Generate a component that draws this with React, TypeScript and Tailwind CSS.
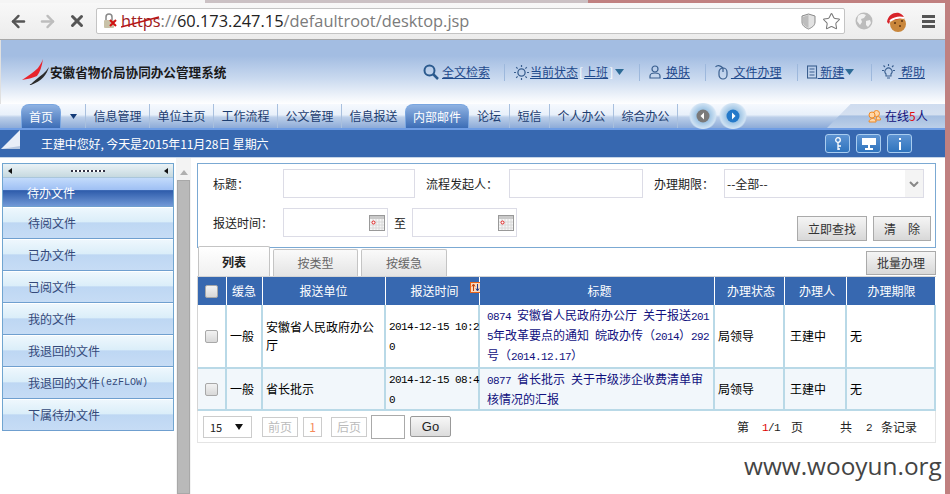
import React from "react";
import { ArrowLeft, ArrowRight, X, Star } from "lucide-react";

const M = ({ children }: { children: React.ReactNode }) => (
  <span className="font-['Liberation_Mono',monospace] text-[11px] tracking-[-0.6px] whitespace-pre">{children}</span>
);

const Sep = () => <div className="w-px h-[17px] bg-[#9db8dc] ml-[15px] mr-[9px]" />;

const Cal = () => (
  <svg width="16" height="16" viewBox="0 0 16 16" className="shrink-0">
    <rect x="0.5" y="0.5" width="15" height="15" fill="#f6f6f6" stroke="#999" />
    <rect x="1" y="1" width="14" height="3" fill="#c9c9c9" />
    <path d="M1 7h14M1 10h14M1 13h14M4 4v11M7 4v11M10 4v11M13 4v11" stroke="#d8d8d8" />
    <circle cx="4.5" cy="7.5" r="1.5" fill="#fff" stroke="#e02020" />
  </svg>
);

const Logo = () => (
  <svg width="28" height="27" viewBox="0 0 28 27" className="shrink-0">
    <path d="M21 0 C20 7 18 13 15 17 C11 19 5 20 0 21 C6 17 12 13 16 9 C18 6 20 3 21 0Z" fill="#e8232c" />
    <path d="M27 8 C25 15 20 22 9 26 C6 26 9 25 9 25 C13 21 17 18 21 15 C23 13 25 11 27 8Z" fill="#2a2a2a" />
  </svg>
);

const Drop = () => <svg width="9" height="6" viewBox="0 0 9 6" className="shrink-0"><path d="M0 0h9L4.5 6z" fill="#2d6b96" /></svg>;

const Sun = () => (
  <svg width="15" height="15" viewBox="0 0 15 15" fill="none" stroke="#3a5f8f" className="shrink-0">
    <circle cx="7.5" cy="7.5" r="3.6" strokeWidth="1.3" />
    <path d="M7.5 0v2M7.5 13v2M0 7.5h2M13 7.5h2M2.2 2.2l1.4 1.4M11.4 11.4l1.4 1.4M2.2 12.8l1.4-1.4M11.4 3.6l1.4-1.4" strokeWidth="1.2" />
  </svg>
);

const RoundBtn = ({ dir, color }: { dir: "l" | "r"; color: string }) => (
  <div className="w-[28px] h-[26px] flex items-center justify-center rounded-full bg-[radial-gradient(circle,#8fbbe0_25%,#cfe2f3_65%,transparent_75%)]">
    <svg width="14" height="14" viewBox="0 0 14 14">
      <circle cx="7" cy="7" r="6.5" fill={color} />
      <path d={dir === "l" ? "M8 3.5v7L4.5 7z" : "M6 3.5v7L9.5 7z"} fill="#fff" />
    </svg>
  </div>
);

const BarBtn = ({ children }: { children: React.ReactNode }) => (
  <div className="w-[25px] h-[19px] rounded-[3px] border border-[#a9cdf0] bg-[linear-gradient(#5d93d2,#2f74be)] flex items-center justify-center">
    {children}
  </div>
);

const SideItem = ({ t }: { t: React.ReactNode }) => (
  <div className="h-[32px] pl-[25px] flex items-center text-[#34497a] border-b border-[#6f9fcf] bg-[linear-gradient(#eef7fd_0%,#dbeef9_45%,#bed7f3_50%,#c6dcf5_100%)] border-t border-t-white">
    {t}
  </div>
);

const Th = ({ w, children, cls = "" }: { w: number; children?: React.ReactNode; cls?: string }) => (
  <th style={{ width: w }} className={"h-[28px] p-0 bg-[#3768b0] border-r border-white text-white font-normal text-center relative " + cls}>
    {children}
  </th>
);

const Td = ({ children, cls = "pl-[3px]" }: { children?: React.ReactNode; cls?: string }) => (
  <td className={"p-0 whitespace-nowrap border-r-2 border-b-2 border-[#b9d9e7] leading-[18px] text-black " + cls}>{children}</td>
);

const Chk = () => <div className="w-[13px] h-[13px] rounded-[2px] border border-[#a8a8a8] bg-[linear-gradient(#f2f2f2,#d8d8d8)] mx-auto" />;

const PageBtn = ({ w, children }: { w: number; children: React.ReactNode }) => (
  <div style={{ width: w }} className="h-[20px] border border-[#ccc] text-[#bbb] flex items-center justify-center">{children}</div>
);

const ToolBtn = ({ w, children }: { w: number; children: React.ReactNode }) => (
  <div style={{ width: w }} className="h-[25px] border border-[#aaa] bg-[linear-gradient(#f5f5f5,#d8d8d8)] text-[#333] flex items-center justify-center">{children}</div>
);

export default function App() {
  return (
    <div className="relative w-[950px] h-[494px] overflow-hidden bg-white flex flex-col text-[12px] leading-[18px] font-['Noto_Sans_CJK_SC','Liberation_Sans',sans-serif]">
      <div className="h-[3px] flex shrink-0">
        <div className="w-[205px] bg-[#f5f5f5]" />
        <div className="w-[383px] bg-[#cbc1c4]" />
        <div className="flex-1 bg-[#c08080]" />
      </div>
      <div className="flex flex-1 min-h-0">
        <div className="w-[945px] flex flex-col">
          {/* browser toolbar */}
          <div className="h-[37px] shrink-0 flex items-center bg-[linear-gradient(#f8f8f8,#ececec)] border-b border-[#a8a8a8]">
            <ArrowLeft size={19} strokeWidth={3} className="ml-[9px] text-[#555] shrink-0" />
            <ArrowRight size={19} strokeWidth={3} className="ml-[10px] text-[#bdbdbd] shrink-0" />
            <X size={18} strokeWidth={4} className="ml-[11px] text-[#555] shrink-0" />
            <div className="ml-[10px] w-[749px] h-[26px] rounded-[2px] border border-[#c4c4c4] bg-white flex items-center pl-[6px] shrink-0">
              <div className="relative w-[15px] h-[16px] shrink-0">
                <svg width="15" height="16" viewBox="0 0 15 16">
                  <path d="M3 7V4a3 3 0 0 1 6 0v3" fill="none" stroke="#888" strokeWidth="1.5" />
                  <rect x="1" y="7" width="10" height="8" rx="1" fill="#c9c2a8" />
                  <path d="M7 7l6 6M13 7l-6 6" stroke="#d01010" strokeWidth="2" />
                </svg>
              </div>
              <div className="ml-[3px] text-[16.4px] font-['Open_Sans',sans-serif] whitespace-nowrap text-[#7b7b7b]">
                <span className="relative text-[#a02020]">
                  https
                  <svg width="40" height="12" viewBox="0 0 40 12" className="absolute left-0 top-[7px]">
                    <path d="M0 11 L38 1" stroke="#b81414" strokeWidth="1.5" />
                  </svg>
                </span>
                ://<span className="text-[#222]">60.173.247.15</span>/defaultroot/desktop.jsp
              </div>
              <div className="ml-auto flex items-center gap-[6px] pr-[3px]">
                <svg width="15" height="17" viewBox="0 0 15 17">
                  <path d="M7.5 1 L14 3 V9 C14 13 10 15 7.5 16 C5 15 1 13 1 9 V3Z" fill="#e2e2e2" stroke="#8a8a8a" />
                  <path d="M7.5 2 L7.5 15 C5 14 2 12 2 9 V4Z" fill="#bdbdbd" />
                </svg>
                <Star size={19} strokeWidth={1.3} className="text-[#777]" />
              </div>
            </div>
            <svg width="18" height="18" viewBox="0 0 18 18" className="ml-[10px] shrink-0">
              <circle cx="9" cy="9" r="8.5" fill="#bcbcbc" />
              <path d="M3 4c3-3 6-2 8-1l-2 3-3 1 1 3-2 3-3-4zM11 9l4-1 1 3-3 4-2-2z" fill="#f1f1f1" />
            </svg>
            <svg width="21" height="21" viewBox="0 0 21 21" className="ml-[13px] shrink-0">
              <circle cx="12" cy="13" r="8" fill="#c9873c" />
              <circle cx="9" cy="12" r="1" fill="#5a3212" />
              <circle cx="14" cy="15" r="1" fill="#5a3212" />
              <circle cx="16" cy="10" r="1" fill="#5a3212" />
              <path d="M1 11C2 4 8 1 13 2c3 1 5 3 5 5L4 10l-1 3z" fill="#d8232a" />
              <path d="M4 10 Q11 5 18 7" stroke="#fff" strokeWidth="2" fill="none" />
            </svg>
            <div className="ml-[15px] w-[13px] flex flex-col gap-[2px] shrink-0">
              <div className="h-[3px] bg-[#555]" />
              <div className="h-[3px] bg-[#555]" />
              <div className="h-[3px] bg-[#555]" />
            </div>
          </div>

          {/* app header */}
          <div className="h-[64px] shrink-0 flex items-center pl-[21px] pr-[20px] bg-[linear-gradient(#a3bde2_0%,#a3bde2_25%,#c9d9ef_60%,#ffffff_100%)] border-l border-[#e0e0e0]">
            <Logo />
            <div className="font-bold text-[12.6px] text-[#1a1a1a] whitespace-nowrap">安徽省物价局协同办公管理系统</div>
            <div className="ml-auto flex items-center text-[#1f4a8c] whitespace-nowrap">
              <svg width="16" height="16" viewBox="0 0 16 16" fill="none" stroke="#2b5a8e" strokeWidth="2" className="mr-[3px]">
                <circle cx="6.5" cy="6.5" r="5" />
                <path d="M10 10l5 5" strokeWidth="2.5" />
              </svg>
              <span className="underline">全文检索</span>
              <div className="w-px h-[17px] bg-[#9db8dc] ml-[14px] mr-[9px]" />
              <Sun />
              <span className="ml-[1px] underline">当前状态</span>
              <span className="text-white ml-[1px] mr-[1px]">[</span>
              <span className="underline">上班</span>
              <span className="text-white ml-[1px] mr-[1px]">]</span>
              <span className="ml-[1px]"><Drop /></span>
              <Sep />
              <svg width="12" height="14" viewBox="0 0 12 14" fill="none" stroke="#3a5f8f" strokeWidth="1.2" className="mr-[1px]">
                <circle cx="6" cy="4" r="3" />
                <path d="M1 13v-2c0-2 2-3 5-3s5 1 5 3v2z" />
              </svg>
              <span className="underline pl-[1px]">&nbsp;换肤</span>
              <Sep />
              <svg width="14" height="16" viewBox="0 0 14 16" fill="none" stroke="#3a5f8f" strokeWidth="1.2" className="mr-[1px]">
                <rect x="4" y="4" width="8" height="11" rx="4" />
                <path d="M8 4v4M0.5 3C2 1 5 1 8 4" />
              </svg>
              <span className="underline pl-[1px]">&nbsp;文件办理</span>
              <Sep />
              <svg width="11" height="14" viewBox="0 0 11 14" fill="none" stroke="#3a5f8f" strokeWidth="1.1">
                <rect x="0.5" y="1" width="9" height="12" />
                <path d="M2.500 4h5M2.500 7h5M2.500 10h5" />
              </svg>
              <span className="underline">&nbsp;新建</span>
              <span className="ml-[1px] mr-[2px]"><Drop /></span>
              <Sep />
              <svg width="15" height="16" viewBox="0 0 15 16" fill="none" stroke="#3a5f8f" strokeWidth="1.1" className="mr-[2px]">
                <path d="M5 10a3.5 3.5 0 1 1 5 0v2H5zM6 14h3" />
                <path d="M7.500 0v2M1 6.500h2M12 6.500h2M2.500 1.500l1.500 1.500M12.500 1.500L11 3" />
              </svg>
              <span className="underline">&nbsp;帮助</span>
            </div>
          </div>

          {/* nav tabs */}
          <div className="h-[26px] shrink-0 flex pl-[21px] text-[#1c3d70] border-b-2 border-[#6f9de4] bg-[linear-gradient(#f6f9fe_0%,#e8f0fa_45%,#bccfe9_55%,#8dabd8_100%)]">
            <div className="w-[40px] rounded-t-[8px] border border-b-0 border-[#7aa6e0] bg-[linear-gradient(#8fb2e2,#3c6db6)] text-white flex items-center justify-center">首页</div>
            <div className="w-[25px] flex items-center justify-center border-r border-[#a9c0de]">
              <svg width="7" height="5" viewBox="0 0 7 5"><path d="M0 0h7L3.500 5z" fill="#123a78" /></svg>
            </div>
            {["信息管理", "单位主页", "工作流程", "公文管理"].map((t) => (
              <div key={t} className="w-[64px] flex items-center justify-center border-r border-[#a9c0de]">{t}</div>
            ))}
            <div className="w-[63px] flex items-center justify-center">信息报送</div>
            <div className="w-[64px] rounded-t-[8px] border border-b-0 border-[#7aa6e0] bg-[linear-gradient(#8fb2e2,#3c6db6)] text-white flex items-center justify-center">内部邮件</div>
            <div className="w-[41px] flex items-center justify-center border-r border-[#a9c0de]">论坛</div>
            <div className="w-[40px] flex items-center justify-center border-r border-[#a9c0de]">短信</div>
            <div className="w-[64px] flex items-center justify-center border-r border-[#a9c0de]">个人办公</div>
            <div className="w-[64px] flex items-center justify-center border-r border-[#a9c0de]">综合办公</div>
            <div className="ml-[11px] flex gap-[2px] items-center">
              <RoundBtn dir="l" color="#7a7a7a" />
              <RoundBtn dir="r" color="#2479c9" />
            </div>
            <div className="ml-auto w-[118px] flex items-center pl-[41px] text-[#10107a] [clip-path:polygon(20%_0,100%_0,100%_100%,0_100%)] bg-[linear-gradient(#cfdcef,#d5e0f0_45%,#a6bfe1_50%,#bccfe8)]">
              <svg width="13" height="13" viewBox="0 0 13 13" className="mr-[4px] shrink-0">
                <circle cx="8.500" cy="3.500" r="3" fill="#ffd6a8" stroke="#f08a24" />
                <circle cx="4" cy="5" r="3" fill="#ffd6a8" stroke="#f08a24" />
                <path d="M1 12c0-4 6-5 7-1v1zM8 10h4.500c0-3-2-4-4-3z" fill="#ffd6a8" stroke="#f08a24" />
              </svg>
              在线<span className="text-[#e01010]">5</span>人
            </div>
          </div>

          {/* welcome bar */}
          <div className="h-[28px] shrink-0 flex items-center bg-[#3768b0] border-b border-[#c5d5e8] text-white">
            <svg width="20" height="20" viewBox="0 0 20 20" className="ml-[1px] shrink-0 self-start">
              <path d="M0 19 L19 0 V19Z" fill="#e8eef8" />
              <path d="M0 19 L19 19 V16Z" fill="#b8c8e0" />
            </svg>
            <div className="ml-[20px] whitespace-nowrap tracking-[-0.1px]">王建中您好, 今天是2015年11月28日 星期六</div>
            <div className="ml-auto mr-[33px] flex gap-[6px]">
              <BarBtn>
                <svg width="8" height="13" viewBox="0 0 8 13" fill="none" stroke="#fff" strokeWidth="1.300"><circle cx="4" cy="3" r="2.300" /><path d="M4 5.500V13M4 9h3M4 12h2" /></svg>
              </BarBtn>
              <BarBtn>
                <svg width="14" height="12" viewBox="0 0 14 12"><path d="M0 0h14v7H0zM6 7h2v3h3v2H3v-2h3z" fill="#fff" /></svg>
              </BarBtn>
              <BarBtn>
                <svg width="4" height="12" viewBox="0 0 4 12"><path d="M1 0h2v2H1zM1 4h2v8H1z" fill="#fff" /></svg>
              </BarBtn>
            </div>
          </div>

          {/* body */}
          <div className="flex-1 min-h-0 flex items-stretch">
            <div className="w-[172px] ml-[2px] mt-[5px] self-start border border-[#70a5d0] border-b-0 shrink-0">
              <div className="h-[14px] flex items-center justify-between px-[5px] bg-[linear-gradient(#eaf2f6,#c6d9df)] border-b border-[#a9c6dc]">
                <svg width="4" height="6" viewBox="0 0 4 6"><path d="M4 0v6L0 3z" fill="#111" /></svg>
                <div className="w-[34px] h-[2px] bg-[repeating-linear-gradient(90deg,#334_0,#334_2px,#fff_2px,#fff_4px)]" />
                <svg width="4" height="6" viewBox="0 0 4 6"><path d="M4 0v6L0 3z" fill="#111" /></svg>
              </div>
              <div className="h-[29px] pl-[24px] pt-[1px] flex items-center text-white border-b border-[#6f9fcf] bg-[linear-gradient(#c3dbfb_0%,#9fc0f4_42%,#2e5cab_45%,#7198d6_100%)]">待办文件</div>
              {["待阅文件", "已办文件", "已阅文件", "我的文件", "我退回的文件"].map((t) => <SideItem key={t} t={t} />)}
              <SideItem t={<>我退回的文件<span className="font-['Liberation_Mono',monospace] text-[10px]">(ezFLOW)</span></>} />
              <SideItem t="下属待办文件" />
            </div>
            <div className="ml-[2px] w-[15px] shrink-0 bg-[#f3f3f3] flex flex-col items-center">
              <svg width="8" height="5" viewBox="0 0 8 5" className="mt-[12px] mb-[5px]"><path d="M0 5h8L4 0z" fill="#b0b0b0" /></svg>
              <div className="w-[13px] flex-1 bg-[#b9b9b9] border border-[#a8a8a8]" />
            </div>
            <div className="ml-[6px] w-[739px] mt-[5px] shrink-0">
              {/* search */}
              <div className="h-[85px] border border-[#7ba9d3] pl-[15px] pt-[5px] text-[#222]">
                <div className="flex items-center">
                  <div className="w-[70px]">标题：</div>
                  <div className="w-[132px] h-[29px] border border-[#dcdce6]" />
                  <div className="ml-[11px] w-[83px]">流程发起人：</div>
                  <div className="w-[134px] h-[29px] border border-[#dcdce6]" />
                  <div className="ml-[11px] w-[70px]">办理期限：</div>
                  <div className="w-[200px] h-[29px] border border-[#dcdce6] pl-[2px] flex items-center">
                    --全部--
                    <div className="ml-auto w-[18px] h-full bg-[#f4f4f4] flex items-center justify-center">
                      <svg width="10" height="6" viewBox="0 0 10 6" fill="none" stroke="#888" strokeWidth="2"><path d="M1 1l4 4 4-4" /></svg>
                    </div>
                  </div>
                </div>
                <div className="flex items-start mt-[10px]">
                  <div className="w-[70px] h-[29px] flex items-center">报送时间：</div>
                  <div className="w-[105px] h-[29px] border border-[#dcdce6] flex items-center justify-end pr-[2px]"><Cal /></div>
                  <div className="w-[24px] h-[29px] pl-[6px] flex items-center">至</div>
                  <div className="w-[105px] h-[29px] border border-[#dcdce6] flex items-center justify-end pr-[2px]"><Cal /></div>
                  <div className="ml-auto mr-[4px] mt-[8px] flex gap-[6px]">
                    <ToolBtn w={70}>立即查找</ToolBtn>
                    <ToolBtn w={58}>清　除</ToolBtn>
                  </div>
                </div>
              </div>

              {/* tabs */}
              <div className="h-[29px] -mt-[1px] flex items-end pl-[1px]">
                <div className="w-[72px] h-[30px] border border-b-0 border-[#c4c4c4] rounded-t-[2px] bg-[linear-gradient(#ffffff,#f0f0f0)] font-bold text-[#222] flex items-center justify-center">列表</div>
                <div className="ml-[3px] w-[85px] h-[27px] border border-b-0 border-[#c4c4c4] rounded-t-[2px] bg-[linear-gradient(#fafafa,#e4e4e4)] text-[#666] flex items-center justify-center">按类型</div>
                <div className="ml-[3px] w-[86px] h-[27px] border border-b-0 border-[#c4c4c4] rounded-t-[2px] bg-[linear-gradient(#fafafa,#e4e4e4)] text-[#666] flex items-center justify-center">按缓急</div>
                <div className="ml-auto mb-[1px] w-[70px] h-[24px] border border-[#aaa] bg-[linear-gradient(#f5f5f5,#d8d8d8)] text-[#333] flex items-center justify-center">批量办理</div>
              </div>

              {/* table */}
              <div className="border border-[#d4d4d4] border-b-0">
                <table className="table-fixed border-collapse w-[737px]">
                  <thead>
                    <tr>
                      <Th w={28}><Chk /></Th>
                      <Th w={36}>缓急</Th>
                      <Th w={123}>报送单位</Th>
                      <Th w={94} cls="pl-[6px] pr-[1px]">
                        报送时间
                        <svg width="11" height="11" viewBox="0 0 11 11" className="absolute right-[-2px] top-[5px]">
                          <rect width="11" height="11" fill="#e8641a" />
                          <rect x="1" y="1" width="9" height="9" fill="#fbd9bd" />
                          <path d="M3.500 9V3M2 4.500L3.500 2 5 4.500" fill="none" stroke="#c2410c" />
                          <path d="M7.500 2v6M6 6.500L7.500 9 9 6.500" fill="none" stroke="#1e3a8a" />
                        </svg>
                      </Th>
                      <Th w={235} cls="pl-[6px]">标题</Th>
                      <Th w={70} cls="pl-[4px]">办理状态</Th>
                      <Th w={62} cls="pl-[4px]">办理人</Th>
                      <Th w={89} cls="pl-[2px]">办理期限</Th>
                    </tr>
                  </thead>
                  <tbody>
                    <tr className="h-[63px] bg-white">
                      <Td cls=""><Chk /></Td>
                      <Td cls="pl-[3px]">一般</Td>
                      <Td>安徽省人民政府办公<br />厅</Td>
                      <Td><M>2014-12-15 10:2<br />0</M></Td>
                      <Td cls="pl-[7px] !text-[#10107e]">
                        <M>0874 </M>安徽省人民政府办公厅<M> </M>关于报送<M>201</M><br />
                        <M>5</M>年改革要点的通知<M> </M>皖政办传（<M>2014</M>）<M>292</M><br />
                        号（<M>2014.12.17</M>）
                      </Td>
                      <Td>局领导</Td>
                      <Td cls="pl-[5px]">王建中</Td>
                      <Td cls="pl-[3px]">无</Td>
                    </tr>
                    <tr className="h-[42px] bg-[#f2f7fb]">
                      <Td cls=""><Chk /></Td>
                      <Td cls="pl-[3px]">一般</Td>
                      <Td>省长批示</Td>
                      <Td><M>2014-12-15 08:4<br />0</M></Td>
                      <Td cls="pl-[7px] !text-[#10107e]">
                        <M>0877 </M>省长批示<M> </M>关于市级涉企收费清单审<br />核情况的汇报
                      </Td>
                      <Td>局领导</Td>
                      <Td cls="pl-[5px]">王建中</Td>
                      <Td cls="pl-[3px]">无</Td>
                    </tr>
                  </tbody>
                </table>
              </div>

              {/* pager */}
              <div className="h-[32px] border border-t-0 border-[#e4e4e4] flex items-center pl-[5px] text-[#222]">
                <div className="w-[49px] h-[22px] border border-[#ccc] flex items-center pl-[6px] text-[11px]">
                  15
                  <svg width="8" height="6" viewBox="0 0 8 6" className="ml-auto mr-[8px]"><path d="M0 0h8L4 6z" fill="#111" /></svg>
                </div>
                <div className="ml-[10px]"><PageBtn w={36}>前页</PageBtn></div>
                <div className="ml-[5px]"><PageBtn w={19}><span className="text-[#f58a5a]">1</span></PageBtn></div>
                <div className="ml-[9px]"><PageBtn w={36}>后页</PageBtn></div>
                <div className="ml-[4px] w-[34px] h-[24px] border border-[#aaa]" />
                <div className="ml-[5px] w-[41px] h-[21px] rounded-[2px] border border-[#999] bg-[linear-gradient(#f7f7f7,#dcdcdc)] flex items-center justify-center font-['Liberation_Sans',sans-serif] text-[13px] text-[#222]">Go</div>
                <div className="ml-[286px] w-[25px]">第</div>
                <div className="w-[29px]"><M><span className="text-[#e00000]">1</span>/1</M></div>
                <div className="w-[49px]">页</div>
                <div className="w-[26px]">共</div>
                <div className="w-[15px]"><M>2</M></div>
                <div>条记录</div>
              </div>
            </div>
          </div>
        </div>
        <div className="w-[5px] bg-[#c08080]" />
      </div>
      <div className="absolute left-[744px] top-[449px] text-[24.4px] leading-[34px] text-[#444] font-['Open_Sans',sans-serif] whitespace-nowrap">www.wooyun.org</div>
    </div>
  );
}
